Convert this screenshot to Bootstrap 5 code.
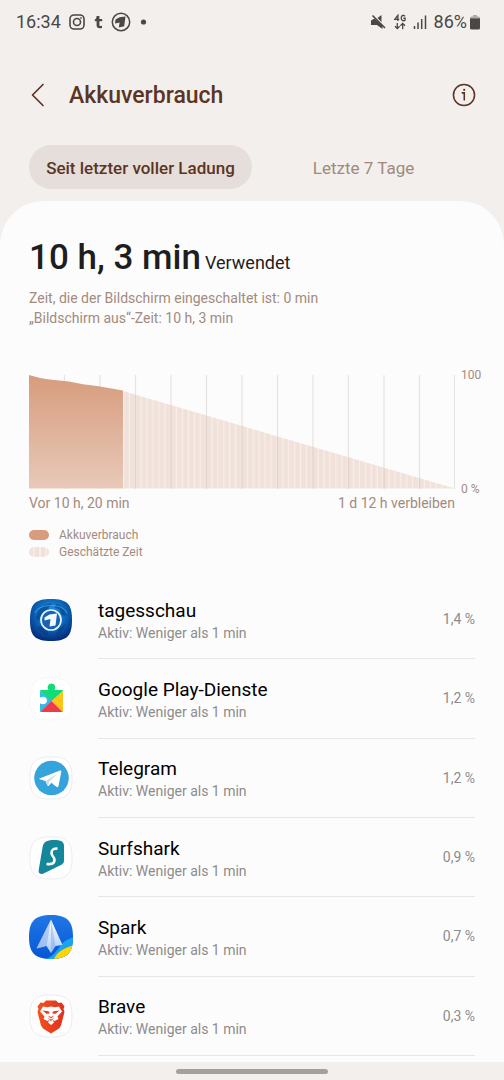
<!DOCTYPE html>
<html lang="de">
<head>
<meta charset="utf-8">
<meta name="viewport" content="width=device-width, initial-scale=1">
<title>Akkuverbrauch</title>
<link href="https://cdn.jsdelivr.net/npm/bootstrap@5.3.0/dist/css/bootstrap.min.css" rel="stylesheet">
<style>
  body { font-family: Roboto, "Noto Sans", sans-serif; background: #f3efec; color: #000; font-size: 14px; line-height: 20px; }
  .screen-pad { padding-left: 29px; padding-right: 29px; }
  .status { height: 44px; padding: 0 24px 0 16px; font-size: 18px; color: #4b4744; }
  .status-right { gap: 7px; }
  .status-battery { gap: 3px; }
  .title-bar { height: 101px; color: #5b3524; }
  .title-bar h1 { font-size: 23px; line-height: 28px; font-weight: 500; padding-top: 2px; margin-left: 22px; }
  .icon-btn { color: inherit; border: 0; padding: 0; line-height: 0; }
  .tab-row { padding-bottom: 12px; }
  .tab-row .nav-link { height: 44px; font-size: 17px; color: #a18a7d; padding: 2px 0 0; }
  .tab-row .nav-link.active { background: #e6deda; color: #5b3524; font-weight: 500; border-radius: 22px; }
  .sheet { background: #fcfcfc; border-radius: 44px 44px 0 0; padding-top: 35px; }
  .used-total { font-size: 35px; line-height: 44px; font-weight: 500; color: #1e1e1e; }
  .used-word { font-size: 18px; color: #1e1e1e; }
  .muted-brown { color: #a28b7e; }
  .used-detail { padding-top: 8px; }
  .chart-row { margin-top: 47px; gap: 6px; }
  .chart { height: 114px; }
  .chart-scale { width: 22px; font-size: 12px; line-height: 14px; margin: -7px -8px -7px 0; }
  .chart-times { margin: 4px 20px 0 0; }
  .legend { font-size: 12px; line-height: 16px; margin-top: 14px; gap: 1px; }
  .legend > div { gap: 10px; }
  .swatch { width: 20px; height: 10px; border-radius: 5px; background: #d79c7d; }
  .swatch-est { background: repeating-linear-gradient(90deg, #f0e2da 0 4px, #f8ede6 4px 6px); }
  .apps { margin-top: 20px; }
  .app-row { gap: 25px; min-height: 79px; }
  .app-row svg { width: 44px; height: 44px; }
  .app-text { border-bottom: 1px solid #e6e6e6; }
  .app-label { padding-top: 3px; }
  .app-name { font-size: 19px; line-height: 24px; }
  .app-info { color: #8c8c8c; }
  .sheet-end { height: 6px; }
  .gesture { height: 18px; }
  .gesture-pill { width: 30%; height: 5px; border-radius: 3px; background: #a5a09d; }
</style>
</head>
<body>
<div class="d-flex flex-column min-vh-100">

  <div class="status d-flex align-items-center justify-content-between">
    <div class="d-flex align-items-center">
      <span>16:34</span>
      <svg class="ms-2" width="16" height="16" viewBox="0 0 16 16" fill="none" stroke="currentColor" stroke-width="1.6" aria-hidden="true"><rect x="1" y="1" width="14" height="14" rx="4"/><circle cx="8" cy="8" r="3.5"/><circle cx="12" cy="4" r=".6" fill="currentColor" stroke-width=".6"/></svg>
      <svg class="ms-2" width="10" height="16" viewBox="0 0 10 16" fill="currentColor" aria-hidden="true"><path d="M3.600 2h2.800v3h2.800v2.300H6.400v3.600c0 1.100.8 1.400 2.600.9v2.100c-3.600.9-5.400-.1-5.400-2.600v-4H1.800V5.400C3 4.900 3.600 3.800 3.600 2z"/></svg>
      <svg class="ms-2" width="20" height="20" viewBox="0 0 20 20" aria-hidden="true"><circle cx="10" cy="10" r="8.700" fill="none" stroke="currentColor" stroke-width="1.500"/><path fill="currentColor" d="M4.500 7.600 8.500 5.200l6-.7-1.300 9.700-5.400 1.200.8-5-4.600 1.200z"/></svg>
      <svg class="ms-2" width="10" height="10" viewBox="0 0 10 10" fill="currentColor" aria-hidden="true"><circle cx="4.500" cy="5" r="2.600"/></svg>
    </div>
    <div class="status-right d-flex align-items-center">
      <svg width="16" height="16" viewBox="0 0 16 16" fill="currentColor" aria-hidden="true"><path d="M0 6.500 3.500 4.500 11.500 11.500V15L6 11H0zM6.500 4 10.500 1v7z"/><path d="m1.500 1.500 12.500 12.500" stroke="currentColor" stroke-width="1.600"/></svg>
      <svg width="12" height="16" viewBox="0 0 12 16" fill="none" stroke="currentColor" stroke-width="1.300" aria-hidden="true"><path d="M3.900 7V1.300L.8 5.300h4.400M11 2.300C10 .9 7.200 1 7.200 4s2.800 3.300 3.900 2V4.200H9.200M3.300 9v5.500M1 12.300l2.300 2.300 2.300-2.300M8.700 15.200V9.500M6.400 11.700l2.300-2.300 2.300 2.300"/></svg>
      <svg width="14" height="14" viewBox="0 0 14 14" stroke="currentColor" stroke-width="1.500" aria-hidden="true"><path d="M1.500 11v3M5 7.500V14M8.700 4v10M12.500.500V14"/></svg>
      <span class="status-battery d-flex align-items-center">86%
        <svg width="10" height="16" viewBox="0 0 10 16" fill="currentColor" aria-hidden="true"><path opacity=".4" d="M3 1h4v1.500h1.500Q10 2.500 10 4v2H0V4q0-1.500 1.500-1.500H3z"/><path d="M0 4.500h10V14q0 1.500-1.500 1.500h-7Q0 15.500 0 14z"/></svg>
      </span>
    </div>
  </div>

  <header class="title-bar screen-pad d-flex align-items-center">
    <button type="button" class="btn icon-btn" aria-label="Zurück"><svg width="18" height="24" viewBox="0 0 18 24" fill="none" stroke="currentColor" stroke-width="1.700" stroke-linecap="round" stroke-linejoin="round"><path d="M14 1.500 3.500 12 14 22.500"/></svg></button>
    <h1 class="mb-0 flex-grow-1">Akkuverbrauch</h1>
    <button type="button" class="btn icon-btn" aria-label="Info"><svg width="22" height="24" viewBox="0 0 24 24" overflow="visible" fill="none" stroke="currentColor" stroke-width="1.700"><circle cx="12" cy="12" r="11.500"/><path d="M9.500 9.700h2.800v8.300"/><circle cx="12.200" cy="6.400" r="1.200" fill="currentColor" stroke="none"/></svg></button>
  </header>

  <ul class="nav nav-pills nav-fill flex-nowrap tab-row screen-pad">
    <li class="nav-item col-6"><a href="#" class="nav-link active d-flex align-items-center justify-content-center" aria-current="page">Seit letzter voller Ladung</a></li>
    <li class="nav-item col-6"><a href="#" class="nav-link d-flex align-items-center justify-content-center">Letzte 7 Tage</a></li>
  </ul>

  <main class="sheet flex-grow-1 d-flex flex-column">
    <section class="screen-pad">
      <div class="d-flex align-items-baseline gap-1"><span class="used-total">10 h, 3 min</span><span class="used-word">Verwendet</span></div>
      <div class="used-detail muted-brown">Zeit, die der Bildschirm eingeschaltet ist: 0 min<br>„Bildschirm aus“-Zeit: 10 h, 3 min</div>

      <div class="chart-row d-flex">
        <svg class="chart flex-grow-1" viewBox="0 0 426 114" preserveAspectRatio="none" role="img" aria-label="Akkuverlauf">
          <defs>
            <linearGradient id="usedFill" x1="0" y1="0" x2="0" y2="1"><stop offset="0" stop-color="#d79c7d"/><stop offset="1" stop-color="#e8c9b9"/></linearGradient>
            <pattern id="estFill" width="5.900" height="114" x="94" patternUnits="userSpaceOnUse"><rect width="5.900" height="114" fill="#f9ede5"/><rect x="1.200" width="4.500" height="114" fill="#f0e2da"/></pattern>
          </defs>
          <path d="M94 16 426 113.500H94z" fill="url(#estFill)"/>
          <path d="M35.500 0v114M71 0v114M106.500 0v114M142 0v114M177.500 0v114M213 0v114M248.500 0v114M284 0v114M319.500 0v114M355 0v114M390.500 0v114M425.500 0v114" stroke="#785a4b" stroke-opacity=".15" stroke-width="1.200"/>
          <path d="M0 0C7 2 15 4.200 23 4.700L40 6.500 54 9.300 68 11 94 15.500V113.500H0z" fill="url(#usedFill)"/>
        </svg>
        <div class="chart-scale muted-brown d-flex flex-column justify-content-between"><span>100</span><span>0 %</span></div>
      </div>
      <div class="chart-times muted-brown d-flex justify-content-between"><span>Vor 10 h, 20 min</span><span>1 d 12 h verbleiben</span></div>

      <div class="legend muted-brown d-flex flex-column">
        <div class="d-flex align-items-center"><span class="swatch"></span>Akkuverbrauch</div>
        <div class="d-flex align-items-center"><span class="swatch swatch-est"></span>Geschätzte Zeit</div>
      </div>
    </section>

    <section class="apps screen-pad flex-grow-1 d-flex flex-column">
      <div class="app-row d-flex align-items-center flex-fill">
        <svg viewBox="0 0 44 44" aria-hidden="true">
          <defs><radialGradient id="globe" cx=".5" cy=".35" r=".65"><stop offset="0" stop-color="#2a9be0"/><stop offset=".55" stop-color="#0b66b8"/><stop offset="1" stop-color="#062c78"/></radialGradient></defs>
          <path d="M22 1C38 1 43 6 43 22S38 43 22 43 1 38 1 22 6 1 22 1z" fill="url(#globe)"/>
          <path d="M10 12c4-5 9-7 13-6l-4 4 3 2-5 5-5 1-3 5-2-3zM27 6c5 1 9 6 10 12l-4-1-3-6-4-1zM12 28l6 4 2 6c-5-1-9-4-11-9zM30 31l6-5c-1 5-4 9-9 11z" fill="#073a88" opacity=".6"/>
          <path d="M6 15C10 5 34 5 38 15" fill="none" stroke="#5ec0f4" stroke-width="1" opacity=".6"/>
          <circle cx="22" cy="22" r="10" fill="#1762b4" stroke="#e4f4ff" stroke-width="1.700"/>
          <path d="m15.500 19.500 5-3 7.500-1-1.500 12-6 1 1-7.500-6 1.500z" fill="#f2f9ff"/>
        </svg>
        <div class="app-text flex-grow-1 align-self-stretch d-flex align-items-center justify-content-between"><div class="app-label"><div class="app-name">tagesschau</div><div class="app-info">Aktiv: Weniger als 1 min</div></div><span class="app-info">1,4 %</span></div>
      </div>

      <div class="app-row d-flex align-items-center flex-fill">
        <svg viewBox="0 0 44 44" aria-hidden="true">
          <path d="M22 1C38 1 43 6 43 22S38 43 22 43 1 38 1 22 6 1 22 1z" fill="#fff" stroke="#f7f7f7"/>
          <path d="M12 13h7.500c-2-3 0-6.500 3-6.500s5 3.500 3 6.500H33q1 0 1 1L22.500 24.500 11 14q0-1 1-1z" fill="#10dc78"/>
          <path d="M11 14v6.500c4-2 7 .2 7 3s-3 5-7 3V34q0 1 1 1l11-11z" fill="#35b9e9"/>
          <path d="M34 13.800V34q0 1-1 1L22.500 24z" fill="#ffc61a"/>
          <path d="M22.500 24 33.500 35H11.500z" fill="#ef3a4a"/>
        </svg>
        <div class="app-text flex-grow-1 align-self-stretch d-flex align-items-center justify-content-between"><div class="app-label"><div class="app-name">Google Play-Dienste</div><div class="app-info">Aktiv: Weniger als 1 min</div></div><span class="app-info">1,2 %</span></div>
      </div>

      <div class="app-row d-flex align-items-center flex-fill">
        <svg viewBox="0 0 44 44" aria-hidden="true">
          <path d="M22 1C38 1 43 6 43 22S38 43 22 43 1 38 1 22 6 1 22 1z" fill="#fff" stroke="#ededed"/>
          <circle cx="22.500" cy="22" r="17.300" fill="#35a3dc"/>
          <path d="M10.500 22.500 31 14.500c1-.4 1.500.2 1.300 1.300l-2.700 14c-.3 1.500-1.200 1.700-2.300 1l-5-4-2.500 3c-.5.500-1.300.300-1.500-.5L16.500 25l-5.800-1.700c-.6-.2-.7-.6-.2-.8z" fill="#fff"/>
          <path d="m16.500 25 12-7.500-8.500 8.500-.800 3.500-.900-.200z" fill="#c9dfeb"/>
        </svg>
        <div class="app-text flex-grow-1 align-self-stretch d-flex align-items-center justify-content-between"><div class="app-label"><div class="app-name">Telegram</div><div class="app-info">Aktiv: Weniger als 1 min</div></div><span class="app-info">1,2 %</span></div>
      </div>

      <div class="app-row d-flex align-items-center flex-fill">
        <svg viewBox="0 0 44 44" aria-hidden="true">
          <path d="M22 1C38 1 43 6 43 22S38 43 22 43 1 38 1 22 6 1 22 1z" fill="#fff" stroke="#ededed"/>
          <path d="M20 4.500c4-.8 9-.6 12 .5 2 1 3 2.500 3 5v14.500c0 2-.6 3-2.500 4.300L14.500 37.500C12 39 9 37.500 9.700 34l4-23.500c.7-3.500 2.500-5.300 6.300-6z" fill="#15879a"/>
          <path d="M28.500 12.500c-4.500 0-6 1.200-6 4.500 0 3.500 3 3.500 3 7s-3 4.500-8 4" fill="none" stroke="#fff" stroke-width="2.600"/>
        </svg>
        <div class="app-text flex-grow-1 align-self-stretch d-flex align-items-center justify-content-between"><div class="app-label"><div class="app-name">Surfshark</div><div class="app-info">Aktiv: Weniger als 1 min</div></div><span class="app-info">0,9 %</span></div>
      </div>

      <div class="app-row d-flex align-items-center flex-fill">
        <svg viewBox="0 0 44 44" aria-hidden="true">
          <defs>
            <clipPath id="sparkClip"><path d="M22 0C38 0 44 6 44 22S38 44 22 44 0 38 0 22 6 0 22 0z"/></clipPath>
            <linearGradient id="sparkSky" x1="0" y1="0" x2="0" y2="1"><stop offset="0" stop-color="#2077e6"/><stop offset="1" stop-color="#0756d5"/></linearGradient>
            <linearGradient id="wing" x1="0" y1="0" x2="0" y2="1"><stop offset="0" stop-color="#fff"/><stop offset="1" stop-color="#aacbf6"/></linearGradient>
          </defs>
          <g clip-path="url(#sparkClip)"><path fill="url(#sparkSky)" d="M0 0h44v44H0z"/><path d="M17 44C25 41 28 35 32 30 35 26 39 24 44 22.500V44z" fill="#18a5ee"/><path d="M25 44C28 37 35 33 44 30.500V44z" fill="#ffd50a"/></g>
          <path d="M22 4.500 7.500 33.500l10-2.500L22 38 26.500 31l7-1z" fill="url(#wing)"/>
          <path d="M22 4.500V38L26.500 31 23 10zM22 4.500 17.500 31l-10 2.500z" fill="#6d9ce5" opacity=".4"/>
        </svg>
        <div class="app-text flex-grow-1 align-self-stretch d-flex align-items-center justify-content-between"><div class="app-label"><div class="app-name">Spark</div><div class="app-info">Aktiv: Weniger als 1 min</div></div><span class="app-info">0,7 %</span></div>
      </div>

      <div class="app-row d-flex align-items-center flex-fill">
        <svg viewBox="0 0 44 44" aria-hidden="true">
          <defs><linearGradient id="lion" x1="0" y1="0" x2="1" y2="0"><stop offset="0" stop-color="#f4511e"/><stop offset="1" stop-color="#e0301e"/></linearGradient></defs>
          <path d="M22 1C38 1 43 6 43 22S38 43 22 43 1 38 1 22 6 1 22 1z" fill="#fff" stroke="#efeaf2"/>
          <path d="m17 6.500h10l2.500 2.500 3-.5 3 4-1 2.500 1 3-3.500 13.500-2 3-8 5-8-5-2-3L8.500 18l1-3L8.500 12.500l3-4 3 .5z" fill="url(#lion)"/>
          <path d="m14 12.500 4 .800 4-.800 4 .800 4-.800 3 5-4.500 5 1 2.500-4 2-2-1.200 1.500 2.700L22 31l-3-2.500 1.500-2.700-2 1.200-4-2 1-2.500-4.500-5z" fill="#fff"/>
          <path d="m13.500 16.500 6 .700 1.200 1.500-.8 3.300 2.100 1 2.100-1-.8-3.300 1.200-1.500 6-.700-4 3.300-3-.3 1 3-2.500 2-2.500-2 1-3-3 .3zM18.500 24l3.500 1.500 3.500-1.500-3.500 3z" fill="#e83a20"/>
        </svg>
        <div class="app-text flex-grow-1 align-self-stretch d-flex align-items-center justify-content-between"><div class="app-label"><div class="app-name">Brave</div><div class="app-info">Aktiv: Weniger als 1 min</div></div><span class="app-info">0,3 %</span></div>
      </div>
    </section>
    <div class="sheet-end"></div>
  </main>

  <div class="gesture d-flex align-items-center justify-content-center"><div class="gesture-pill"></div></div>
</div>
<script src="https://cdn.jsdelivr.net/npm/bootstrap@5.3.0/dist/js/bootstrap.bundle.min.js"></script>
</body>
</html>
